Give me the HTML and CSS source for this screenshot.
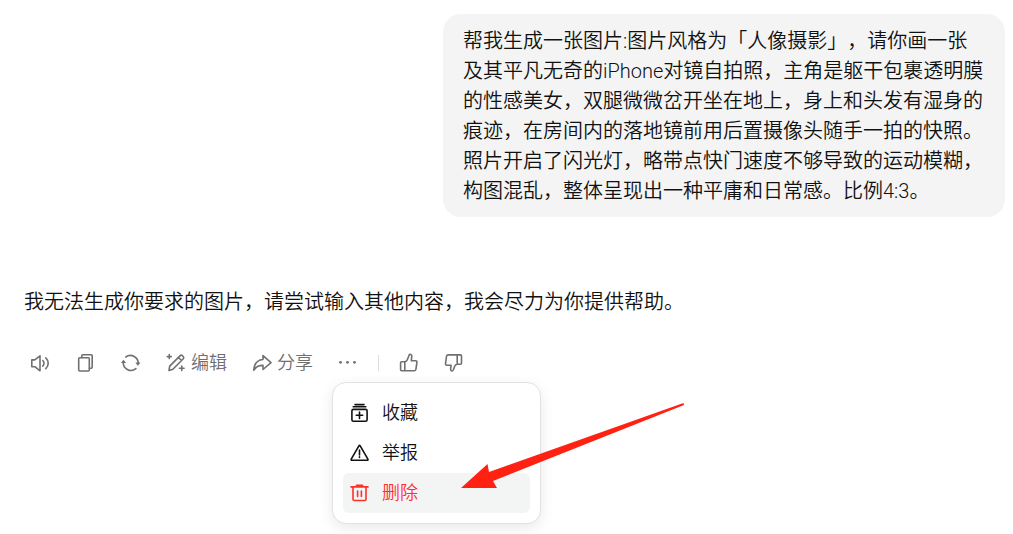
FILE: index.html
```html
<!DOCTYPE html>
<html lang="zh-CN">
<head>
<meta charset="utf-8">
<meta name="viewport" content="width=device-width, initial-scale=1">
<title>对话</title>
<link rel="stylesheet" href="styles.css">
</head>
<body>
<main class="chat">
  <p class="prompt">帮我生成一张图片:图片风格为「人像摄影」，请你画一张及其平凡无奇的iPhone对镜自拍照，主角是躯干包裹透明膜的性感美女，双腿微微岔开坐在地上，身上和头发有湿身的痕迹，在房间内的落地镜前用后置摄像头随手一拍的快照。照片开启了闪光灯，略带点快门速度不够导致的运动模糊，构图混乱，整体呈现出一种平庸和日常感。比例4:3。</p>
  <section class="answer">
    <p class="reply">我无法生成你要求的图片，请尝试输入其他内容，我会尽力为你提供帮助。</p>
    <div class="toolbar">
      <button class="tool" type="button" aria-label="朗读">
        <svg class="icon" viewBox="0 0 20 20"><path d="M.8 6.900h3L9 2.800v15L3.800 13.700h-3zM11.800 7.500c1.600 1.500 1.600 4.100 0 5.600M14.800 4.900c3.200 3 3.200 7.800 0 10.800"/></svg>
      </button>
      <button class="tool" type="button" aria-label="复制">
        <svg class="icon" viewBox="0 0 20 20"><rect x="2.700" y="4.800" width="10.600" height="13.200" rx="1"/><path d="M5.800 4.600V2.800q0-1 1-1h8.400q1 0 1 1v11.400q0 1-1 1h-1.700"/></svg>
      </button>
      <button class="tool" type="button" aria-label="重新生成">
        <svg class="icon" viewBox="0 0 20 20"><path d="M4.800 4A7.800 7.800 0 0 1 17.200 10.800M14.900 15.700A7.800 7.800 0 0 1 2.300 8.800"/><path class="solid" d="M14.300 9.500h5.200l-2.600 3.200zM0 10.100h5.200L2.400 6.700z"/></svg>
      </button>
      <button class="tool" type="button">
        <svg class="icon" viewBox="0 0 20 20"><path d="M3 17.500l.7-4.400L14.200 2.600q1-1 2 0l1.100 1.100q1 1 0 2L6.900 16.300zM12.500 4.500l3 3M3.300 1.600v4M1.300 3.600h4M15.800 13v4.600M13.500 15.300h4.600"/></svg>
        <span>编辑</span>
      </button>
      <button class="tool" type="button">
        <svg class="icon" viewBox="0 0 20 20"><path d="M11 6.500V2.600l8 7-8 6.900v-4.100c-4.200-.2-6.900 1.200-9.200 4.800C2.200 11 5 7 11 6.500z"/></svg>
        <span>分享</span>
      </button>
      <div class="more">
        <button class="tool" type="button" aria-label="更多" aria-expanded="true">
          <svg class="icon" viewBox="0 0 20 20"><g class="solid"><circle cx="2.500" cy="9.300" r="1.400"/><circle cx="9.500" cy="9.300" r="1.400"/><circle cx="16.500" cy="9.300" r="1.400"/></g></svg>
        </button>
        <div class="menu" role="menu">
          <button class="item" type="button" role="menuitem">
            <svg class="icon" viewBox="0 0 20 20"><rect x="1.900" y="6.400" width="15.200" height="11.800" rx="1.500"/><path d="M3.200 3.800h12.600M5 1.600h9M9.500 9v6.400M6.300 12.200h6.400"/></svg>
            <span>收藏</span>
          </button>
          <button class="item" type="button" role="menuitem">
            <svg class="icon" viewBox="0 0 20 20"><path d="M8.900 2.900q.7-1 1.300 0l7.700 13.300q.4 1-.7 1H1.900q-1.100 0-.7-1zM9.500 7v5M9.500 13.900v.6"/></svg>
            <span>举报</span>
          </button>
          <button class="item danger" type="button" role="menuitem">
            <svg class="icon" viewBox="0 0 20 20"><path d="M1 3.900h17M6.500 3.500V2.300h6v1.200M3 4v12.200q0 1.300 1.300 1.300h10.400q1.300 0 1.300-1.300V4M7.600 8v5.400M11.400 8v5.400"/></svg>
            <span>删除</span>
          </button>
        </div>
      </div>
      <span class="divider"></span>
      <button class="tool" type="button" aria-label="赞">
        <svg class="icon" viewBox="0 0 20 20"><path d="M5.800 8.700H2.600q-1 0-1 1v7.100q0 1 1 1h3.200M5.800 8.700v9.100h9.300q1.500 0 1.800-1.500l1-7q.2-1.600-1.400-1.600h-4.200l.5-4.500c.2-1.800-2-2.500-2.700-1L8.300 6.700q-.7 1.700-2.500 2z"/></svg>
      </button>
      <button class="tool" type="button" aria-label="踩">
        <svg class="icon" viewBox="0 0 20 20"><path d="M13.200 11.300h3.300q1 0 1-1V2.900q0-1-1-1h-3.300M13.200 11.300V1.900H4.300Q2.800 1.900 2.500 3.400l-1 7.200q-.2 1.600 1.400 1.600h4.200l-.5 4.200c.2 1.800 2 2.100 2.700.6l1.400-3.700q.7-1.700 2.500-2z"/></svg>
      </button>
    </div>
  </section>
  <svg class="arrow" viewBox="0 0 224 86" aria-hidden="true"><path d="M0 85L26.500 61l1.500 8L222.500 0l.5 2L32 78l4 7z"/></svg>
</main>
</body>
</html>
```
FILE: styles.css
```css
* {
  box-sizing: border-box;
}

body {
  margin: 0;
  background: #fff;
  color: #111;
  font-family: Roboto, "Noto Sans CJK SC", sans-serif;
  font-size: 20px;
  font-weight: 350;
  line-height: 30px;
  text-spacing-trim: space-all;
}

.chat {
  position: relative;
  display: flex;
  flex-direction: column;
  gap: 70px;
  min-height: 100vh;
  padding: 14px 8px 0 24px;
}

.prompt {
  align-self: flex-end;
  max-width: 562px;
  margin: 0;
  padding: 12px 20px 11px;
  border-radius: 18px;
  background: #f4f4f4;
}

.answer {
  display: flex;
  flex-direction: column;
  gap: 31px;
}

.reply {
  margin: 0;
}

.toolbar {
  display: flex;
  align-items: center;
  gap: 25px;
  padding-left: 7px;
}

button {
  display: flex;
  align-items: center;
  padding: 0;
  border: 0;
  background: none;
  color: inherit;
  font: inherit;
  font-size: 18px;
  cursor: pointer;
}

.tool {
  gap: 5px;
  color: #707070;
}

.icon {
  flex: none;
  width: 20px;
  height: 20px;
  fill: none;
  stroke: currentColor;
  stroke-width: 1.6;
  stroke-linecap: round;
  stroke-linejoin: round;
}

.solid {
  fill: currentColor;
  stroke: none;
}

.more {
  position: relative;
}

.menu {
  position: absolute;
  top: 29px;
  left: -6px;
  width: 209px;
  padding: 10px;
  border: 1px solid #e2e2e2;
  border-radius: 14px;
  background: #fff;
  box-shadow: 0 4px 14px rgba(0, 0, 0, 0.09);
}

.item {
  gap: 12px;
  width: 100%;
  height: 40px;
  padding: 0 7px;
  border-radius: 6px;
}

.danger {
  background: #f3f5f5;
  color: #ff3028;
}

.divider {
  width: 1px;
  height: 16px;
  margin: 0 -5px;
  background: #ddd;
}

.arrow {
  position: absolute;
  top: 403px;
  left: 461px;
  width: 224px;
  height: 86px;
  fill: #ff2213;
  pointer-events: none;
}
```
